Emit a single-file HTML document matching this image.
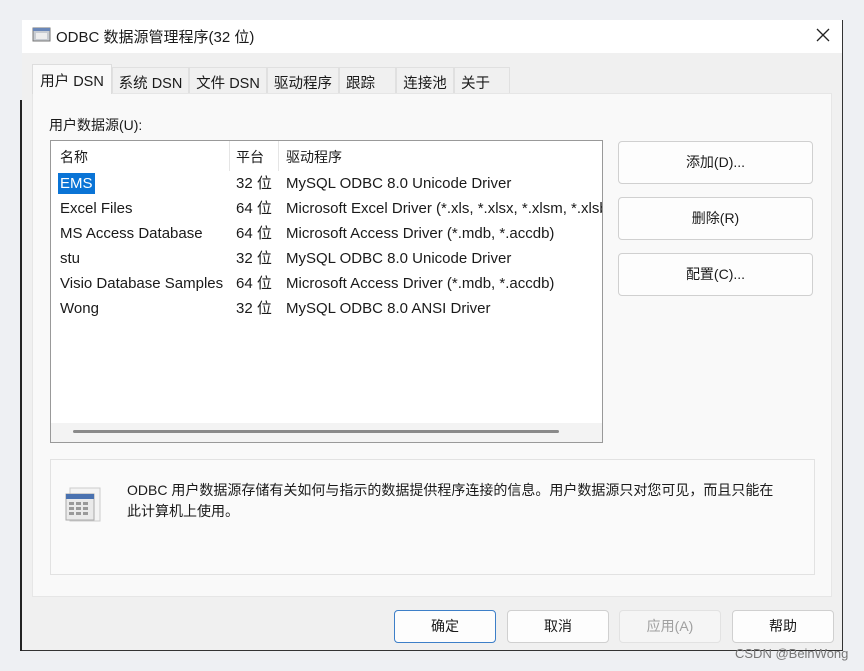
<!DOCTYPE html>
<html><head><meta charset="utf-8"><style>
*{margin:0;padding:0;box-sizing:border-box}
body{width:864px;height:671px;background:#eef0f3;position:relative;overflow:hidden;font-family:"Liberation Sans","Noto Sans CJK SC",sans-serif;font-size:14px;color:#1a1a1a}
.a{position:absolute}
.win{left:22px;top:20px;width:821px;height:631px;background:#f0f0f0;border-right:1px solid #333;border-bottom:1px solid #333}
.title{left:0;top:0;width:820px;height:33px;background:#fff}
.tab{top:47px;height:27px;font-size:14.5px;padding-top:4px;text-align:center;background:#f0f0f0;border:1px solid #e0e0e0;border-bottom:none}
.panel{left:10px;top:73px;width:800px;height:504px;background:#f9f9f9;border:1px solid #e6e6e6}
.btn{background:#fdfdfd;border:1px solid #d0d0d0;border-radius:4px;text-align:center;font-size:14px;line-height:40px}
.row{position:absolute;left:0;height:25px;line-height:25px;font-size:15px;white-space:nowrap}
</style></head><body>
<div class="a" style="left:20px;top:100px;width:2px;height:551px;background:#222"></div>
<div class="a win">
 <div class="a title">
  <svg class="a" style="left:10px;top:6px" width="20" height="18"><rect x="1" y="2" width="17" height="13" fill="#c8ccd2" stroke="#777"/><rect x="1" y="2" width="17" height="3" fill="#6a87b8"/><rect x="4" y="7" width="11" height="6" fill="#eee"/></svg>
  <div class="a" style="left:34px;top:6px;font-size:15px">ODBC 数据源管理程序(32 位)</div>
  <svg class="a" style="left:794px;top:8px" width="14" height="14"><path d="M1 1L13 13M13 1L1 13" stroke="#222" stroke-width="1.3"/></svg>
 </div>
 <div class="a tab" style="left:10px;top:44px;height:30px;width:80px;background:#f9f9f9;border-color:#ddd;z-index:2;padding-top:5px">用户 DSN</div>
 <div class="a tab" style="left:90px;width:77px">系统 DSN</div>
 <div class="a tab" style="left:167px;width:78px">文件 DSN</div>
 <div class="a tab" style="left:245px;width:72px">驱动程序</div>
 <div class="a tab" style="left:317px;width:57px;text-align:left;padding-left:6px">跟踪</div>
 <div class="a tab" style="left:374px;width:58px">连接池</div>
 <div class="a tab" style="left:432px;width:56px;text-align:left;padding-left:6px">关于</div>
 <div class="a panel">
  <div class="a" style="left:16px;top:21px">用户数据源(U):</div>
  <div class="a" style="left:17px;top:46px;width:553px;height:303px;background:#fff;border:1px solid #999">
   <div class="a" style="left:0;top:0;width:551px;height:30px;font-size:14px">
    <span class="a" style="left:9px;top:6px">名称</span>
    <div class="a" style="left:178px;top:0;width:1px;height:30px;background:#e5e5e5"></div>
    <span class="a" style="left:185px;top:6px">平台</span>
    <div class="a" style="left:227px;top:0;width:1px;height:30px;background:#e5e5e5"></div>
    <span class="a" style="left:235px;top:6px">驱动程序</span>
   </div>
   <div class="a" style="left:0;top:30px;width:551px;height:160px;overflow:hidden">
    <div class="row" style="top:0"><span class="a" style="left:7px;top:2px;height:21px;line-height:21px;background:#0a74d6;color:#fff;padding:0 2px">EMS</span><span class="a" style="left:185px">32 位</span><span class="a" style="left:235px">MySQL ODBC 8.0 Unicode Driver</span></div>
    <div class="row" style="top:25px"><span class="a" style="left:9px">Excel Files</span><span class="a" style="left:185px">64 位</span><span class="a" style="left:235px">Microsoft Excel Driver (*.xls, *.xlsx, *.xlsm, *.xlsb)</span></div>
    <div class="row" style="top:50px"><span class="a" style="left:9px">MS Access Database</span><span class="a" style="left:185px">64 位</span><span class="a" style="left:235px">Microsoft Access Driver (*.mdb, *.accdb)</span></div>
    <div class="row" style="top:75px"><span class="a" style="left:9px">stu</span><span class="a" style="left:185px">32 位</span><span class="a" style="left:235px">MySQL ODBC 8.0 Unicode Driver</span></div>
    <div class="row" style="top:100px"><span class="a" style="left:9px">Visio Database Samples</span><span class="a" style="left:185px">64 位</span><span class="a" style="left:235px">Microsoft Access Driver (*.mdb, *.accdb)</span></div>
    <div class="row" style="top:125px"><span class="a" style="left:9px">Wong</span><span class="a" style="left:185px">32 位</span><span class="a" style="left:235px">MySQL ODBC 8.0 ANSI Driver</span></div>
   </div>
   <div class="a" style="left:0;top:282px;width:551px;height:19px;background:#f3f3f3"></div>
   <div class="a" style="left:22px;top:289px;width:486px;height:3px;background:#8a8a8a;border-radius:2px"></div>
  </div>
  <div class="a btn" style="left:585px;top:47px;width:195px;height:43px">添加(D)...</div>
  <div class="a btn" style="left:585px;top:103px;width:195px;height:43px">删除(R)</div>
  <div class="a btn" style="left:585px;top:159px;width:195px;height:43px">配置(C)...</div>
  <div class="a" style="left:17px;top:365px;width:765px;height:116px;border:1px solid #e2e2e2;background:#fafafa">
   <svg class="a" style="left:13px;top:25px" width="40" height="40"><rect x="6" y="3" width="30" height="33" fill="#f4f4f4" stroke="#ccc"/><rect x="2" y="9" width="28" height="26" fill="#eaeaea" stroke="#aaa"/><rect x="2" y="9" width="28" height="5" fill="#4a72b0"/><g fill="#999"><rect x="5" y="17" width="5" height="3"/><rect x="12" y="17" width="5" height="3"/><rect x="19" y="17" width="5" height="3"/><rect x="5" y="22" width="5" height="3"/><rect x="12" y="22" width="5" height="3"/><rect x="19" y="22" width="5" height="3"/><rect x="5" y="27" width="5" height="3"/><rect x="12" y="27" width="5" height="3"/><rect x="19" y="27" width="5" height="3"/></g></svg>
   <div class="a" style="left:76px;top:20px;width:690px;line-height:21px;font-size:14px;white-space:nowrap">ODBC 用户数据源存储有关如何与指示的数据提供程序连接的信息。用户数据源只对您可见，而且只能在<br>此计算机上使用。</div>
  </div>
 </div>
 <div class="a btn" style="left:372px;top:590px;width:102px;height:33px;line-height:31px;border:1.5px solid #3d7fc8">确定</div>
 <div class="a btn" style="left:485px;top:590px;width:102px;height:33px;line-height:31px">取消</div>
 <div class="a btn" style="left:597px;top:590px;width:102px;height:33px;line-height:31px;color:#a0a0a0;background:#f5f5f5;border-color:#e2e2e2">应用(A)</div>
 <div class="a btn" style="left:710px;top:590px;width:102px;height:33px;line-height:31px">帮助</div>
</div>
<div class="a" style="left:735px;top:646px;font-size:13px;color:#777">CSDN @BeinWong</div>
</body></html>
